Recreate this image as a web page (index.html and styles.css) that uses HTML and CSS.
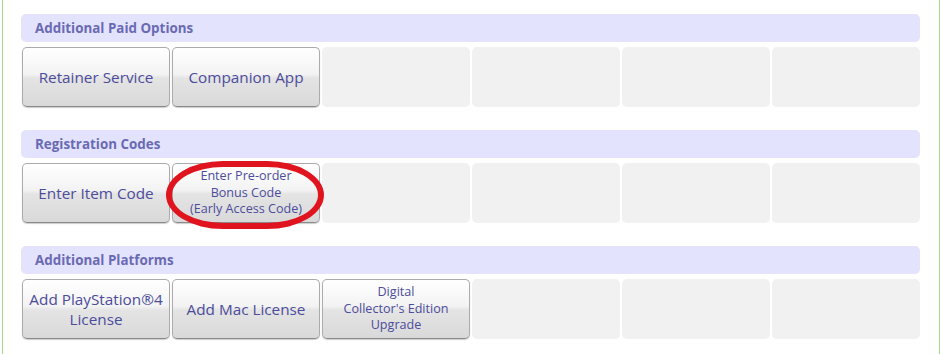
FILE: index.html
```html
<!DOCTYPE html>
<html lang="en">
  <head>
    <meta charset="UTF-8" />
    <title>Options</title>
    <link rel="stylesheet" href="styles.css">
  </head>
  <body>
    <div class="page">
      <div class="section">
        <h3 class="head">Additional Paid Options</h3>
        <div class="grid">
          <a class="btn">Retainer Service</a>
          <a class="btn">Companion App</a>
          <span class="empty"></span>
          <span class="empty"></span>
          <span class="empty"></span>
          <span class="empty"></span>
        </div>
      </div>

      <div class="section">
        <h3 class="head">Registration Codes</h3>
        <div class="grid">
          <a class="btn">Enter Item Code</a>
          <a class="btn small marked">Enter Pre-order<br>Bonus Code<br>(Early Access Code)</a>
          <span class="empty"></span>
          <span class="empty"></span>
          <span class="empty"></span>
          <span class="empty"></span>
        </div>
      </div>

      <div class="section">
        <h3 class="head">Additional Platforms</h3>
        <div class="grid">
          <a class="btn">Add PlayStation®4<br>License</a>
          <a class="btn">Add Mac License</a>
          <a class="btn small">Digital<br>Collector's Edition<br>Upgrade</a>
          <span class="empty"></span>
          <span class="empty"></span>
          <span class="empty"></span>
        </div>
      </div>
    </div>
  </body>
</html>
```

FILE: styles.css
```css
body {
  margin: 0;
  background: #fff;
  font-family: "Open Sans", "DejaVu Sans", sans-serif;
}

.page {
  margin-left: 2px;
  width: 899px;
  min-height: 354px;
  padding: 14px 19px 0 18px;
  border-left: 1px solid #a9d68e;
  border-right: 1px solid #a9d68e;
  box-sizing: content-box;
}

.section {
  margin-bottom: 23px;
}

.head {
  margin: 0 0 5px;
  height: 28px;
  line-height: 28px;
  padding-left: 14px;
  background: #e3e3fd;
  border-radius: 5px;
  font-size: 13.4px;
  font-weight: bold;
  color: #6a6ab4;
}

.grid {
  display: grid;
  grid-template-columns: repeat(6, 1fr);
  gap: 2px;
  height: 60px;
  padding-left: 1px;
}

.btn {
  display: flex;
  align-items: center;
  justify-content: center;
  text-align: center;
  border: 1px solid #ababab;
  border-bottom-color: #8a8a8a;
  border-radius: 5px;
  box-shadow: 0 1px 1px rgba(0, 0, 0, 0.2);
  background: linear-gradient(#ffffff 0%, #f3f3f3 45%, #e4e4e4 52%, #d9d9d9 100%);
  color: #4c4c9c;
  font-size: 15.3px;
  line-height: 20px;
  cursor: pointer;
}

.btn.small {
  font-size: 12.6px;
  line-height: 16.5px;
}

.btn.marked {
  position: relative;
}

.btn.marked::after {
  content: "";
  position: absolute;
  left: -7px;
  top: -3px;
  width: 146px;
  height: 56px;
  border: 6px solid #e0141e;
  border-radius: 36% / 50%;
}

.empty {
  background: #f1f1f1;
  border-radius: 5px;
}
```
